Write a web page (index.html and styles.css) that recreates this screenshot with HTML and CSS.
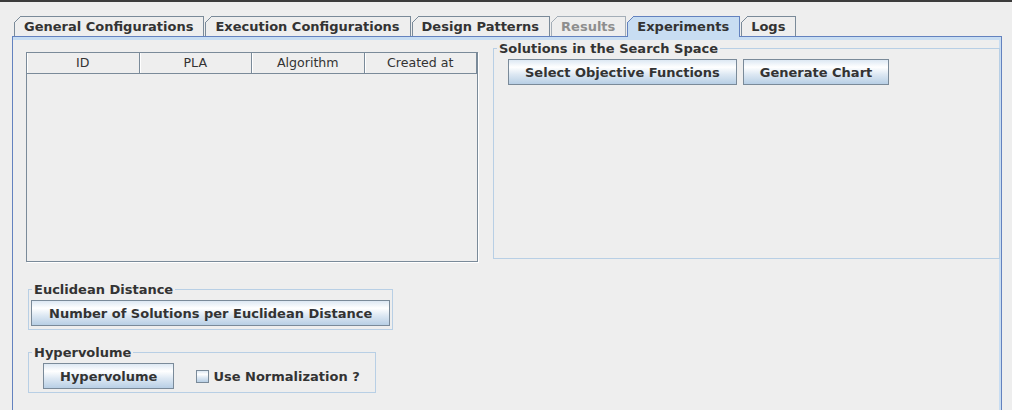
FILE: index.html
```html
<!DOCTYPE html>
<html>
<head>
<meta charset="utf-8">
<title>Experiments</title>
<link rel="stylesheet" href="styles.css">
</head>
<body>
<div class="topbar"></div>
<div class="window">
  <div class="tabs">
    <div class="tab">General Configurations</div>
    <div class="tab">Execution Configurations</div>
    <div class="tab">Design Patterns</div>
    <div class="tab disabled">Results</div>
    <div class="tab selected">Experiments</div>
    <div class="tab">Logs</div>
  </div>
  <div class="panel">
    <div class="top-row">
      <div class="table">
        <div class="thead">
          <div class="th">ID</div>
          <div class="th">PLA</div>
          <div class="th">Algorithm</div>
          <div class="th">Created at</div>
        </div>
        <div class="tbody"></div>
      </div>
      <fieldset class="group solutions">
        <legend>Solutions in the Search Space</legend>
        <div class="body">
          <button class="btn">Select Objective Functions</button>
          <button class="btn">Generate Chart</button>
        </div>
      </fieldset>
    </div>
    <fieldset class="group euclid">
      <legend>Euclidean Distance</legend>
      <div class="body">
        <button class="btn btn-wide">Number of Solutions per Euclidean Distance</button>
      </div>
    </fieldset>
    <fieldset class="group hyper">
      <legend>Hypervolume</legend>
      <div class="body">
        <button class="btn">Hypervolume</button>
        <span class="check"></span>
        <span class="check-label">Use Normalization ?</span>
      </div>
    </fieldset>
  </div>
</div>
</body>
</html>
```

FILE: styles.css
```css
* { box-sizing: border-box; }
html, body { margin: 0; }
body {
  background: #eeeeee;
  font-family: "DejaVu Sans", sans-serif;
  color: #333333;
  width: 1012px;
  height: 410px;
  overflow: hidden;
}
.topbar { height: 2px; background: #3c3c3c; }
.window { padding: 14px 10px 0 12px; }

.tabs {
  display: flex;
  gap: 1px;
  padding-left: 2px;
  position: relative;
  z-index: 1;
}
.tab {
  position: relative;
  height: 20px;
  border: 1px solid #7a8a99;
  border-bottom: none;
  padding: 2px 10px 0 9px;
  font-size: 13px;
  font-weight: bold;
  line-height: 15px;
  white-space: nowrap;
  background: #eeeeee;
}
.tab::before {
  content: "";
  position: absolute;
  top: -1px;
  left: -1px;
  width: 7px;
  height: 7px;
  background: linear-gradient(to bottom right, #eeeeee 0 calc(50% - 0.6px), #7a8a99 calc(50% - 0.6px) calc(50% + 0.6px), transparent calc(50% + 0.6px));
}
.tab.disabled { color: #8e8e8e; border-color: #a4aeb8; }
.tab.disabled::before {
  background: linear-gradient(to bottom right, #eeeeee 0 calc(50% - 0.6px), #a4aeb8 calc(50% - 0.6px) calc(50% + 0.6px), transparent calc(50% + 0.6px));
}
.tab.selected {
  background: #c8ddf2;
  border-color: #6382bf;
  height: 21px;
  margin-bottom: -1px;
}
.tab.selected::before {
  background: linear-gradient(to bottom right, #eeeeee 0 calc(50% - 0.6px), #6382bf calc(50% - 0.6px) calc(50% + 0.6px), transparent calc(50% + 0.6px));
}

.panel {
  border: 1px solid #6382bf;
  box-shadow: inset 0 3px 0 #c8ddf2, inset -2px 0 0 #c8ddf2;
  height: 380px;
  padding: 4px 1px 0 13px;
}

.top-row {
  display: grid;
  grid-template-columns: 452px 1fr;
  column-gap: 15px;
}

.table {
  margin-top: 11px;
  height: 210px;
  border: 1px solid #7a8a99;
  box-shadow: 1px 1px 0 #ffffff;
  display: flex;
  flex-direction: column;
}
.thead {
  display: grid;
  grid-template-columns: repeat(4, 1fr);
  height: 21px;
  border-bottom: 1px solid #7a8a99;
}
.th {
  font-size: 12.6px;
  line-height: 20px;
  text-align: center;
  border-right: 1px solid #7a8a99;
  box-shadow: inset 1px 0 0 #ffffff;
}
.tbody { flex: 1; }

.group {
  border: 1px solid #b8cfe5;
  margin: 0;
  padding: 0;
  min-width: 0;
}
.group legend {
  font-size: 13px;
  font-weight: bold;
  line-height: 15px;
  padding: 0 2px;
  margin-left: 3px;
}

.solutions { margin-bottom: 3px; }
.solutions .body {
  display: flex;
  gap: 6px;
  padding: 3px 0 0 14px;
}

.btn {
  font-family: "DejaVu Sans", sans-serif;
  font-size: 13px;
  font-weight: bold;
  line-height: 15px;
  color: #333333;
  border: 1px solid #7a8a99;
  border-radius: 0;
  padding: 5px 16px 4px;
  background: linear-gradient(#dde8f3 0%, #ffffff 30%, #dde8f3 60%, #b8cfe5 100%);
  white-space: nowrap;
}
.btn-wide { padding-left: 17px; padding-right: 17px; }

.euclid {
  width: fit-content;
  margin: 20px 0 0 2px;
}
.euclid .body { padding: 3px 2px 3px 2px; }

.hyper {
  width: fit-content;
  margin: 15px 0 0 2px;
}
.hyper .body {
  display: flex;
  align-items: center;
  padding: 3px 15px 3px 14px;
}
.check {
  width: 13px;
  height: 13px;
  margin-left: 22px;
  border: 1px solid #7a8a99;
  background: linear-gradient(#dde8f3 0%, #ffffff 30%, #dde8f3 60%, #b8cfe5 100%);
}
.check-label {
  margin-left: 4px;
  font-size: 13px;
  font-weight: bold;
  line-height: 15px;
}
```
